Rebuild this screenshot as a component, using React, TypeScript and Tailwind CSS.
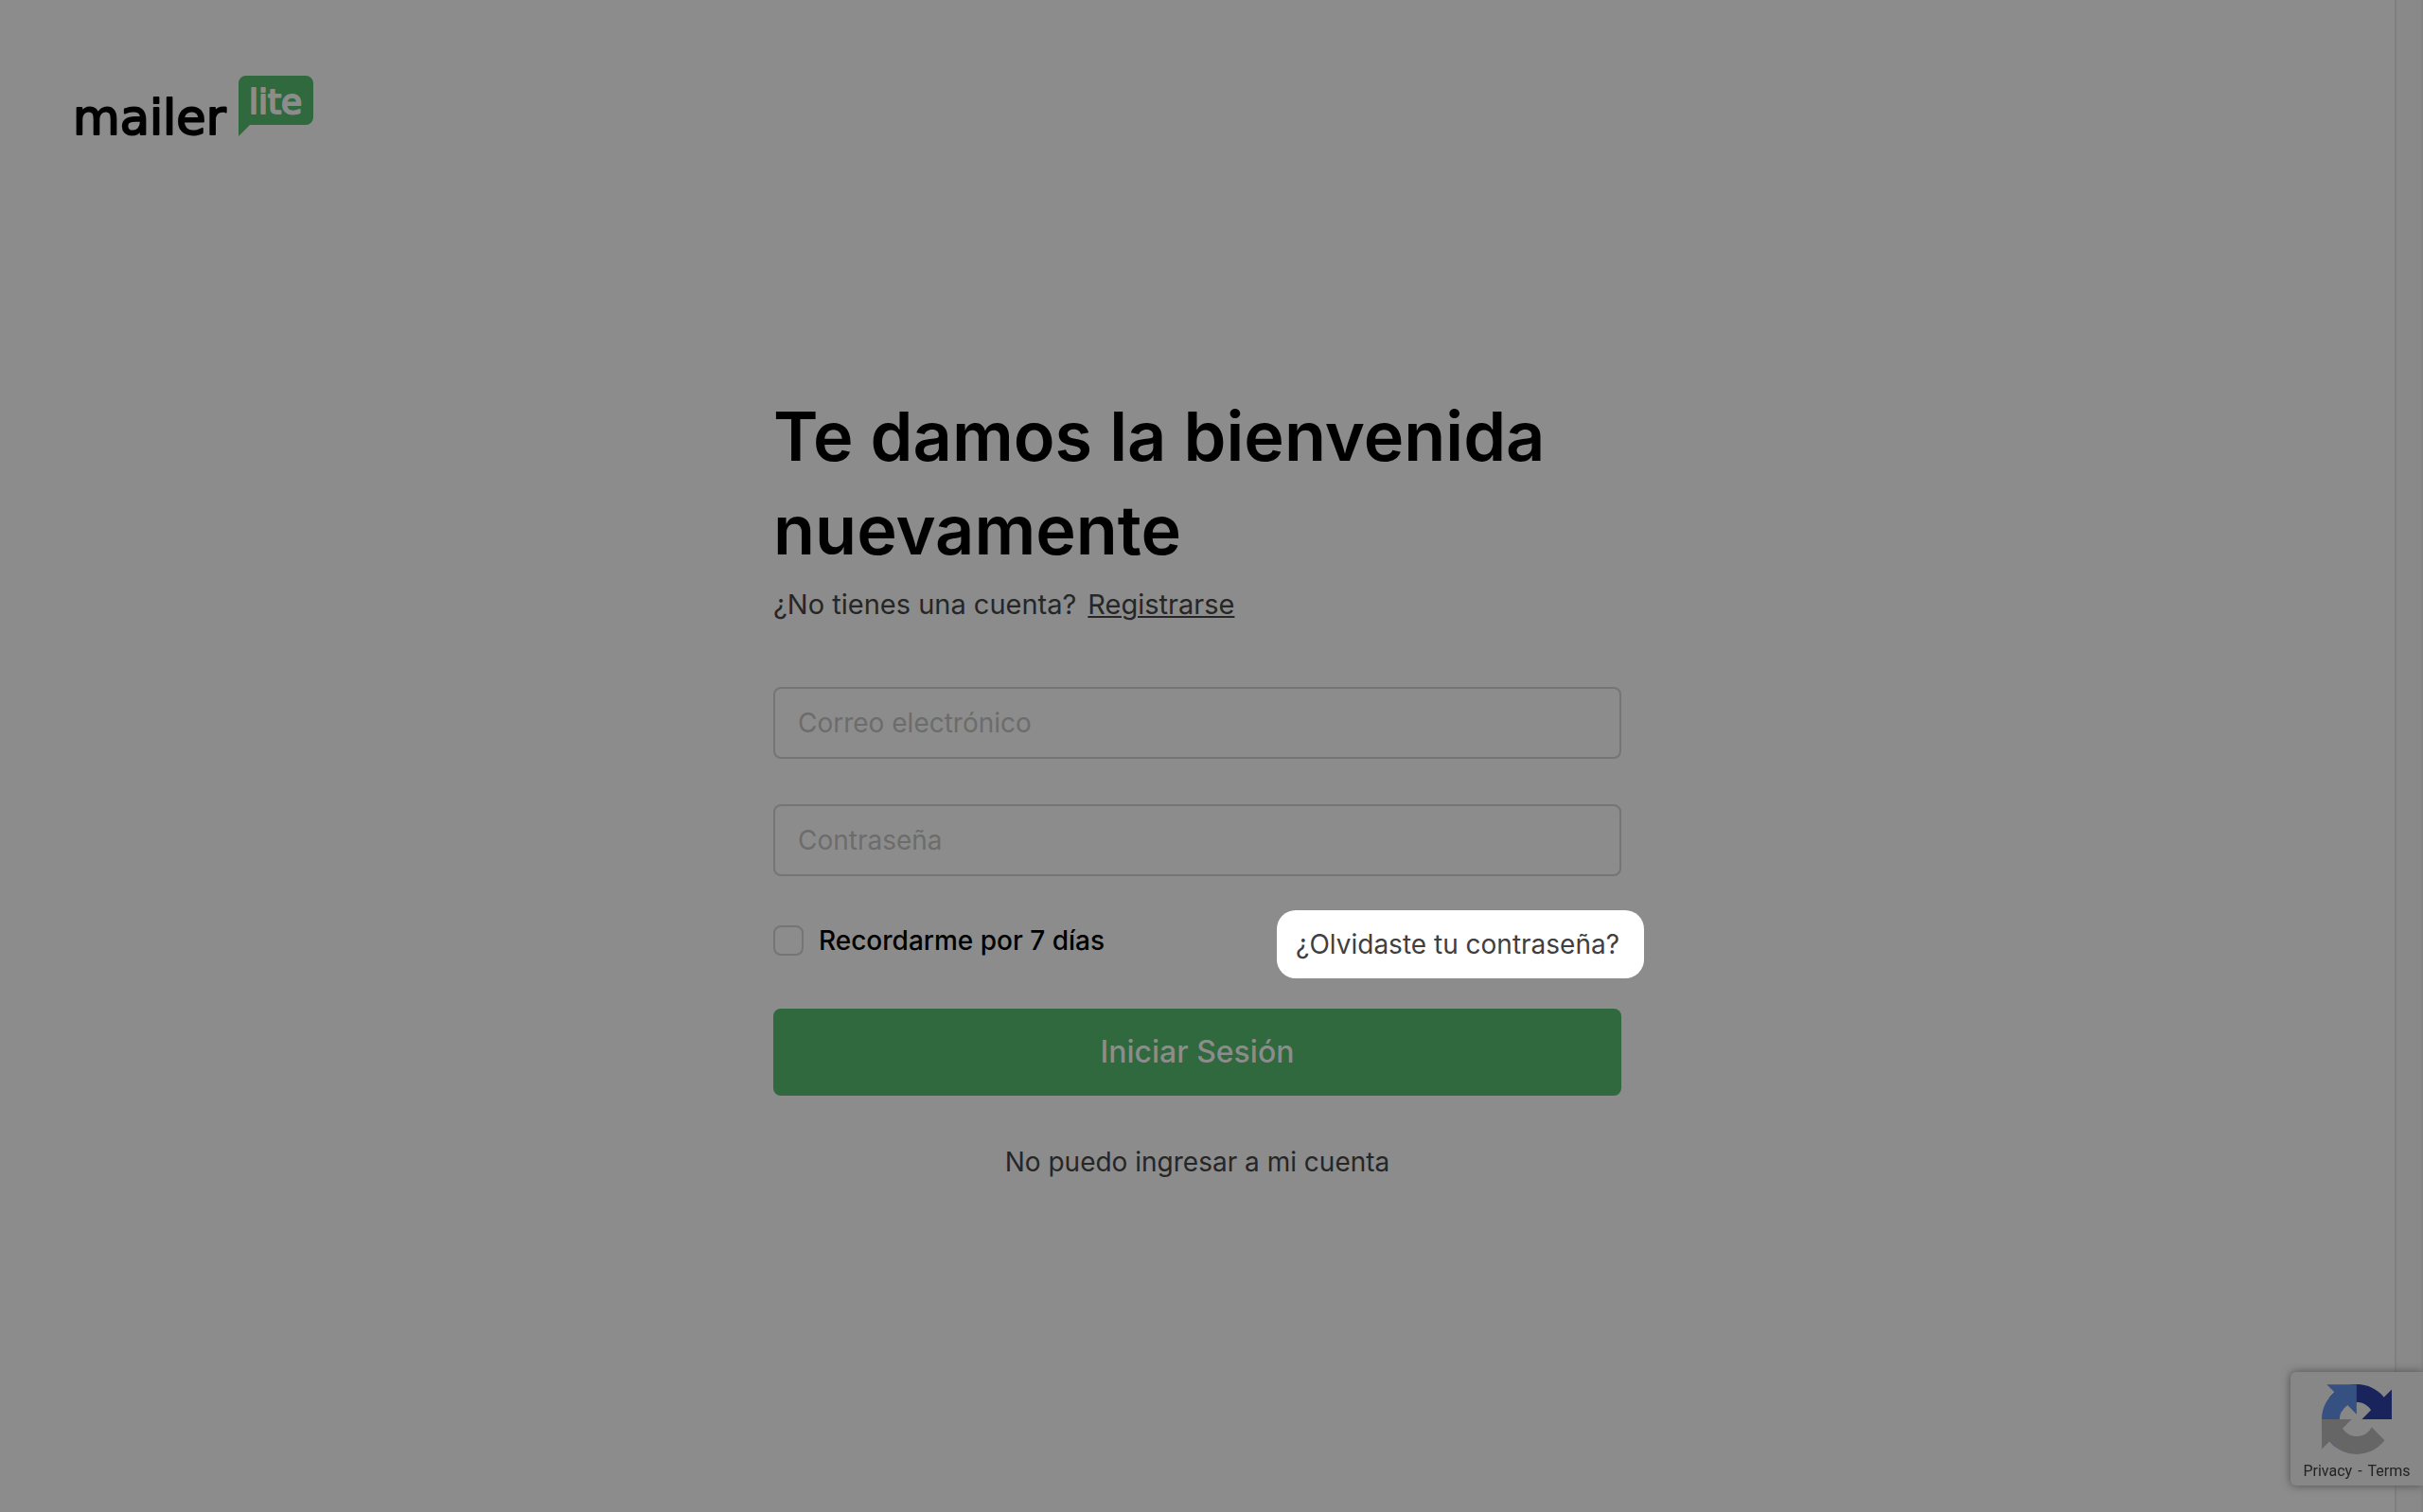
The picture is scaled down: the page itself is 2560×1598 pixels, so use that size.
import React from "react";

function Logo() {
  return (
    <svg
      className="h-24 w-68"
      viewBox="-8 -8 272 96"
      role="img"
      aria-label="mailer lite"
      strokeLinejoin="round"
      strokeLinecap="round"
    >
      <text x="-3" y="62" fontFamily="'DejaVu Sans', sans-serif" fontSize="51" fill="#000" stroke="#000" strokeWidth="2">
        mailer
      </text>
      <path d="M180 0H243a8 8 0 0 1 8 8V44a8 8 0 0 1-8 8H184L172 64V8a8 8 0 0 1 8-8Z" fill="#2f693d" />
      <text x="183" y="40" fontFamily="'DejaVu Sans', sans-serif" fontSize="36" fill="#8c8c8c" stroke="#8c8c8c" strokeWidth="2">
        lite
      </text>
    </svg>
  );
}

function RecaptchaMark() {
  return (
    <svg className="size-[74px]" viewBox="0 0 64 64" aria-hidden="true">
      <path
        fill="#18245b"
        d="M64 31.955l-.033-1.37V4.687l-7.16 7.16C50.948 4.674 42.033.093 32.05.093c-10.4 0-19.622 4.96-25.458 12.64l11.736 11.86a15.55 15.55 0 0 1 4.754-5.334c2.05-1.6 4.952-2.906 8.968-2.906.485 0 .86.057 1.135.163 4.976.393 9.288 3.14 11.828 7.124l-8.307 8.307L64 31.953"
      />
      <path
        fill="#375082"
        d="M31.862.094l-1.37.033H4.594l7.16 7.16C4.58 13.147 0 22.06 0 32.046c0 10.4 4.96 19.622 12.64 25.458L24.5 45.768a15.55 15.55 0 0 1-5.334-4.754c-1.6-2.05-2.906-4.952-2.906-8.968 0-.485.057-.86.163-1.135.393-4.976 3.14-9.288 7.124-11.828l8.307 8.307L31.86.095"
      />
      <path
        fill="#666666"
        d="M.001 32.045l.033 1.37v25.898l7.16-7.16c5.86 7.173 14.774 11.754 24.76 11.754 10.4 0 19.622-4.96 25.458-12.64l-11.736-11.86a15.55 15.55 0 0 1-4.754 5.334c-2.05 1.6-4.952 2.906-8.968 2.906-.485 0-.86-.057-1.135-.163-4.976-.393-9.288-3.14-11.828-7.124l8.307-8.307c-10.522.04-22.4.066-27.295-.005"
      />
    </svg>
  );
}

const fieldClass =
  "block h-19 w-full rounded-lg border-2 border-[#757577] bg-transparent px-6 text-[28px] text-black outline-none placeholder:text-[#6c6c6c]";

function LoginForm() {
  return (
    <form className="mt-[65px]" onSubmit={(e) => e.preventDefault()}>
      <input className={fieldClass} type="email" aria-label="Correo electrónico" placeholder="Correo electrónico" />
      <input className={`${fieldClass} mt-12`} type="password" aria-label="Contraseña" placeholder="Contraseña" />
      <div className="mt-13 flex items-start justify-between">
        <label className="flex items-center gap-4 text-[28px] leading-8 font-medium text-black">
          <input type="checkbox" className="size-8 appearance-none rounded-lg border-2 border-[#757577] checked:bg-[#2f693d]" />
          Recordarme por 7 días
        </label>
        <a
          href="#recuperar"
          className="relative isolate pr-0.5 text-[28px] leading-10 text-[#3f3f3f] before:absolute before:-inset-y-4 before:-right-6 before:-left-5 before:-z-10 before:rounded-[20px] before:bg-white"
        >
          ¿Olvidaste tu contraseña?
        </a>
      </div>
      <button
        type="submit"
        className="mt-12 h-23 w-full rounded-lg bg-[#2f693d] text-[32px] font-medium text-[#8c8c8c]"
      >
        Iniciar Sesión
      </button>
    </form>
  );
}

export default function App() {
  return (
    <div className="flex min-h-screen bg-[#8c8c8c] font-['Inter',sans-serif]">
      <div className="min-w-0 flex-1">
        <header className="px-18 pt-18 pb-14">
          <a href="#inicio" className="block w-fit">
            <Logo />
          </a>
        </header>
        <main className="mx-auto mt-[187px] max-w-4xl">
          <h1 className="text-[72px] leading-[99px] font-semibold text-black">
            Te damos la bienvenida nuevamente
          </h1>
          <p className="mt-2 flex gap-3 text-[29px] leading-[44px] text-[#262626]">
            <span>¿No tienes una cuenta?</span>
            <a href="#registro" className="underline decoration-2 underline-offset-2">
              Registrarse
            </a>
          </p>
          <LoginForm />
          <p className="mt-12 text-center text-[28px] leading-[44px]">
            <a href="#ayuda" className="text-[#262626]">
              No puedo ingresar a mi cuenta
            </a>
          </p>
        </main>
      </div>
      <div className="w-[30px] shrink-0 border-x-2 border-l-[#7f7f7f] border-r-[#848484] bg-[#898989]" />
      <aside className="fixed right-0 bottom-7 flex h-30 w-35 flex-col items-center rounded-l-md bg-[#878787] pt-[13px] shadow-[0_0_10px_#4d4d4d]">
        <RecaptchaMark />
        <div className="mt-2 flex gap-1.5 font-['Roboto',sans-serif] text-[16px] leading-5 text-[#222222]">
          <a href="#privacidad">Privacy</a>
          <span>-</span>
          <a href="#terminos">Terms</a>
        </div>
      </aside>
    </div>
  );
}
